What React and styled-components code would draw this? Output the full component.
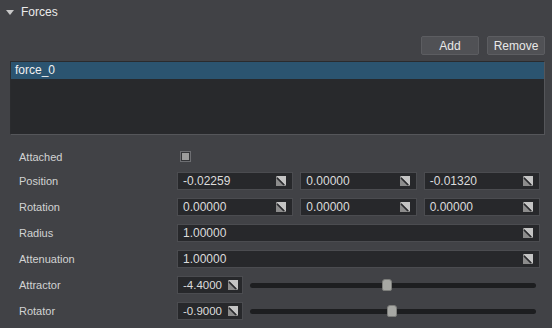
import styled, { createGlobalStyle } from "styled-components";

const Global = createGlobalStyle`
  html, body {
    margin: 0;
    padding: 0;
    background: #414246;
  }
  body {
    font-family: "Liberation Sans", Arial, sans-serif;
    color: #d6d6d6;
  }
`;

const Page = styled.div`
  width: 552px;
  height: 328px;
  background: #414246;
  overflow: hidden;
`;

const Header = styled.div`
  height: 24px;
  display: flex;
  align-items: center;
  padding-left: 6px;
  gap: 7px;
  font-size: 12px;
  color: #ebebeb;
`;

const Arrow = styled.span`
  width: 0;
  height: 0;
  border-left: 4px solid transparent;
  border-right: 4px solid transparent;
  border-top: 5px solid #c8c8c8;
  margin-top: 1px;
`;

const Body = styled.div`
  padding: 12px 7px 0 10px;
`;

const ButtonRow = styled.div`
  display: flex;
  justify-content: flex-end;
  gap: 8px;
`;

const Button = styled.button`
  width: 58px;
  height: 19px;
  padding: 0;
  background: #505155;
  border: 1px solid #5c5d61;
  border-radius: 2px;
  color: #e8e8e8;
  font-family: inherit;
  font-size: 12px;
`;

const List = styled.div`
  margin-top: 6px;
  height: 72px;
  background: #28292c;
  border: 1px solid #55565a;
  border-top-color: #2a2b2e;
  border-left-color: #2a2b2e;
`;

const ListItem = styled.div`
  height: 17px;
  line-height: 17px;
  padding-left: 4px;
  font-size: 12px;
  color: ${(p) => (p.selected ? "#f0f0f0" : "#d6d6d6")};
  background: ${(p) => (p.selected ? "#2b5470" : "transparent")};
`;

const Props = styled.div`
  margin-top: 14px;
  display: grid;
  grid-template-columns: 167px 1fr;
  grid-template-rows: 15px;
  grid-auto-rows: 18px;
  row-gap: 8px;
  align-items: center;
  padding-right: 5px;
`;

const Label = styled.div`
  padding-left: 9px;
  font-size: 11px;
  color: #d2d3d3;
`;

const Fields = styled.div`
  display: flex;
  gap: 7px;
  align-items: center;
`;

const Field = styled.div`
  flex: ${(p) => (p.fixed ? `0 0 ${p.fixed}px` : 1)};
  height: 18px;
  box-sizing: border-box;
  display: flex;
  align-items: center;
  justify-content: space-between;
  padding: 0 ${(p) => (p.fixed ? 4 : 6)}px 0 5px;
  background: #27282b;
  border: 1px solid #4b4c50;
  font-size: ${(p) => (p.fixed ? 11.5 : 12)}px;
  color: #dcdcdc;
`;

const Check = styled.div`
  width: 11px;
  height: 11px;
  margin-left: 3px;
  box-sizing: border-box;
  border: 1px solid #6d6e72;
  background: #333437;
  display: flex;
  align-items: center;
  justify-content: center;
  &::after {
    content: "";
    width: 7px;
    height: 7px;
    background: #9c9c9c;
  }
`;

const Slider = styled.div`
  flex: 1;
  position: relative;
  height: 5px;
  margin: 0 4px 0 0;
  background: #1d1e20;
  border-radius: 3px;
`;

const Thumb = styled.div`
  position: absolute;
  top: -4px;
  width: 10px;
  height: 12px;
  margin-left: -5px;
  box-sizing: border-box;
  background: #a7a8a4;
  border: 1px solid #7c7d7a;
  border-radius: 3px 3px 2px 2px;
`;

const DragIcon = () => (
  <svg width="10" height="10" viewBox="0 0 10 10">
    <polygon points="0,0 10,0 10,10" fill="#c4c4c4" />
    <polygon points="0,0 0,10 10,10" fill="#8c8c8c" />
    <line x1="1" y1="2" x2="8" y2="9" stroke="#2a2b2e" strokeWidth="1.6" />
  </svg>
);

const NumberField = ({ value, fixed }) => (
  <Field fixed={fixed}>
    <span>{value}</span>
    <DragIcon />
  </Field>
);

const SliderField = ({ value, min, max }) => (
  <Fields>
    <NumberField value={value.toFixed(4)} fixed={66} />
    <Slider>
      <Thumb style={{ left: `${((value - min) / (max - min)) * 100}%` }} />
    </Slider>
  </Fields>
);

export default function App() {
  return (
    <Page>
      <Global />
      <Header>
        <Arrow />
        <span>Forces</span>
      </Header>
      <Body>
        <ButtonRow>
          <Button>Add</Button>
          <Button>Remove</Button>
        </ButtonRow>
        <List>
          <ListItem selected>force_0</ListItem>
        </List>
        <Props>
          <Label>Attached</Label>
          <Check />
          <Label>Position</Label>
          <Fields>
            <NumberField value="-0.02259" />
            <NumberField value="0.00000" />
            <NumberField value="-0.01320" />
          </Fields>
          <Label>Rotation</Label>
          <Fields>
            <NumberField value="0.00000" />
            <NumberField value="0.00000" />
            <NumberField value="0.00000" />
          </Fields>
          <Label>Radius</Label>
          <Fields>
            <NumberField value="1.00000" />
          </Fields>
          <Label>Attenuation</Label>
          <Fields>
            <NumberField value="1.00000" />
          </Fields>
          <Label>Attractor</Label>
          <SliderField value={-4.4} min={-10} max={1.7} />
          <Label>Rotator</Label>
          <SliderField value={-0.9} min={-2} max={0.21} />
        </Props>
      </Body>
    </Page>
  );
}
